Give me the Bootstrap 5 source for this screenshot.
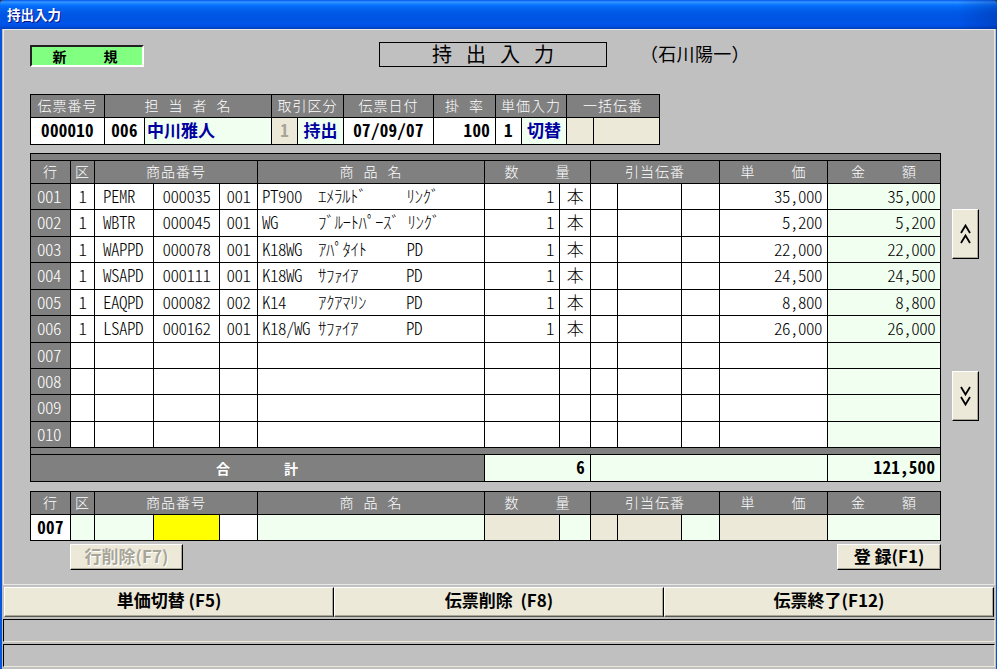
<!DOCTYPE html>
<html lang="ja">
<head>
<meta charset="utf-8">
<title>持出入力</title>
<link href="https://cdn.jsdelivr.net/npm/bootstrap@5.3.0/dist/css/bootstrap.min.css" rel="stylesheet">
<style>
html,body{margin:0;width:997px;height:669px;overflow:hidden;background:#c0c0c0}
body{font-family:"Noto Sans CJK JP",sans-serif;font-size:16px;line-height:1;color:#000;font-feature-settings:"hwid"}
.winbox{width:997px;height:669px;background:#333}
.capbar{height:29px;padding:8px 0 0 7px;color:#fff;font-weight:700;font-size:13.5px;text-shadow:1px 1px 0 #0f1089;border-radius:4px 4px 0 0;
 background:linear-gradient(90deg,transparent 96%,rgba(0,30,130,.3) 100%),linear-gradient(180deg,#0058ee 0,#3593ff 2px,#288eff 3px,#127dff 4px,#036ffc 6px,#0262ee 9px,#0057e5 14px,#0054e3 20px,#0055eb 24px,#0050e0 26px,#003fbb 29px)}
.winbody{background:#c0c0c0;border-left:2px solid #0855dd;border-right:1px solid #0855dd;padding:0 1px}
.mainpane{height:556px;border:1px solid #e8e8e8;padding:12px 0 0 26px}
.headrow{height:25px}
.modeflag{width:114px;height:22px;background:#80ff80;font-weight:700;font-size:14px;border:2px solid;border-color:#222 #fff #fff #222;white-space:pre;text-align:center;line-height:18px;word-spacing:-.8px;padding-right:4px}
.formtitle{width:228px;height:25px;margin-left:235px;border:1px solid #000;font-size:20px;line-height:21px;text-align:center;letter-spacing:14px;padding-left:14px}
.whoname{margin-left:33px;font-size:18px;line-height:23px;letter-spacing:.3px;font-feature-settings:normal;align-self:flex-start}
.ledger{table-layout:fixed;border-collapse:collapse;margin:0;white-space:pre;--bs-table-bg:#fff}
.ledger th,.ledger td{border:1px solid #000;padding:0 4px 3px;vertical-align:middle;text-align:center;font-weight:300;font-size:17px;letter-spacing:-.5px;color:#000;background:#fff;overflow:hidden;line-height:1}
.ledger th{padding-bottom:2px}
.ledger .tone-g{background:#808080;color:#fff;font-size:14px;letter-spacing:1px;word-spacing:1px}
.ledger .tone-n{background:#808080;color:#fff;padding-right:7px}
.ledger .tone-h{background:#f0fff0}
.ledger .tone-b{background:#ece9d8}
.ledger .tone-y{background:#ff0}
.ledger .blue{color:#0000a0;font-weight:700;font-size:17px;letter-spacing:0}
.ledger .strong{font-weight:700;font-size:17px;letter-spacing:.3px}
.ledger .dim{color:#a8a698;font-weight:700;font-size:17px;letter-spacing:0}
.ledger .lt{text-align:left}
.ledger .rt{text-align:right;padding-right:5px}
.ledger .ind{padding-left:8px}
.ledger .namecell{padding-left:2px}
.ledger .sum{font-weight:700;word-spacing:.8px;letter-spacing:1px;font-size:14px;padding:0 0 1px}
.rowh0{height:23px}.rowh1{height:27px}.rowh2{height:26px}.rowh3{height:7px}
.ledger .rowh3 td{padding:0;font-size:1px}
.topgrid{width:630px;margin-top:27px!important}
.listgrid,.entrygrid{width:911px}
.listwrap{margin-top:8px}
.sidekeys{margin-left:11px;padding-top:56px;height:268px}
.entrygrid{margin-top:9px!important}
.winkey{background:#ece9d8;border:1px solid;border-color:#fff #000 #000 #fff;box-shadow:inset -1px -1px 0 #aca899;border-radius:0;padding:0 0 3px;color:#000;font-weight:700;font-size:17px;line-height:1;white-space:pre}
.winkey:hover,.winkey:active{background:#ece9d8;border-color:#fff #000 #000 #fff;color:#000}
.winkey.off,.winkey:disabled{opacity:1;background:#ece9d8;border-color:#fff #000 #000 #fff;color:#a8a698;text-shadow:1px 1px 0 #fff}
.arrowkey{width:27px;height:50px;flex-direction:column;display:flex;align-items:center;justify-content:center;padding:0}
.arrowkey svg{display:block}
.minikeys{width:911px;height:26px;margin-top:3px;padding-left:40px}
.minikeys .winkey{height:26px}
.delkey{width:113px}
.regkey{width:104px}
.cmdrow{margin:2px 1px 0;height:30px;padding:0}
.cmdrow .winkey{height:30px;flex:1 1 0;border-color:#fff #000 #5a5a50 #fff;padding-bottom:5px}
.statbar{height:23px;margin-top:2px;border-top:1px solid #000;border-left:1px solid #000;border-bottom:1px solid #ece9d8;border-right:1px solid #ece9d8;background:#c0c0c0}
</style>
</head>
<body>
<div class="winbox d-flex flex-column">
  <div class="capbar">持出入力</div>
  <div class="winbody flex-grow-1">
    <div class="mainpane">
      <div class="headrow d-flex align-items-end">
        <div class="modeflag">新      規</div>
        <div class="formtitle">持出入力</div>
        <div class="whoname">（石川陽一）</div>
      </div>

      <table class="table table-bordered ledger topgrid">
        <colgroup><col style="width:74px"><col style="width:40px"><col style="width:127px"><col style="width:26px"><col style="width:46px"><col style="width:90px"><col style="width:62px"><col style="width:26px"><col style="width:45px"><col style="width:27px"><col style="width:66px"></colgroup>
        <thead><tr class="rowh0">
          <th class="tone-g">伝票番号</th><th class="tone-g" colspan="2">担 当 者 名</th><th class="tone-g" colspan="2">取引区分</th><th class="tone-g">伝票日付</th><th class="tone-g">掛 率</th><th class="tone-g" colspan="2">単価入力</th><th class="tone-g" colspan="2">一括伝番</th>
        </tr></thead>
        <tbody><tr class="rowh1">
          <td class="strong">000010</td><td class="strong">006</td><td class="blue lt tone-h namecell">中川雅人</td><td class="dim tone-b">1</td><td class="blue tone-h">持出</td><td class="strong">07/09/07</td><td class="strong rt">100</td><td class="strong">1</td><td class="blue tone-h">切替</td><td class="tone-b"></td><td class="tone-b"></td>
        </tr></tbody>
      </table>

      <div class="listwrap d-flex align-items-start">
        <table class="table table-bordered ledger listgrid">
          <colgroup><col style="width:40px"><col style="width:24px"><col style="width:59px"><col style="width:66px"><col style="width:38px"><col style="width:227px"><col style="width:75px"><col style="width:31px"><col style="width:27px"><col style="width:64px"><col style="width:38px"><col style="width:108px"><col style="width:113px"></colgroup>
          <thead>
            <tr class="rowh3"><td class="tone-n" colspan="13"></td></tr>
            <tr class="rowh0"><th class="tone-g">行</th><th class="tone-g">区</th><th class="tone-g" colspan="3">商品番号</th><th class="tone-g">商 品 名</th><th class="tone-g" colspan="2">数    量</th><th class="tone-g" colspan="3">引当伝番</th><th class="tone-g">単    価</th><th class="tone-g">金    額</th></tr>
          </thead>
          <tbody>
            <tr class="rowh2"><td class="tone-n">001</td><td>1</td><td class="lt ind">PEMR</td><td>000035</td><td>001</td><td class="lt">PT900  ｴﾒﾗﾙﾄﾞ     ﾘﾝｸﾞ</td><td class="rt">1</td><td>本</td><td></td><td></td><td></td><td class="rt">35,000</td><td class="rt tone-h">35,000</td></tr>
            <tr class="rowh1"><td class="tone-n">002</td><td>1</td><td class="lt ind">WBTR</td><td>000045</td><td>001</td><td class="lt">WG     ﾌﾞﾙｰﾄﾊﾟｰｽﾞ ﾘﾝｸﾞ</td><td class="rt">1</td><td>本</td><td></td><td></td><td></td><td class="rt">5,200</td><td class="rt tone-h">5,200</td></tr>
            <tr class="rowh2"><td class="tone-n">003</td><td>1</td><td class="lt ind">WAPPD</td><td>000078</td><td>001</td><td class="lt">K18WG  ｱﾊﾟﾀｲﾄ     PD</td><td class="rt">1</td><td>本</td><td></td><td></td><td></td><td class="rt">22,000</td><td class="rt tone-h">22,000</td></tr>
            <tr class="rowh1"><td class="tone-n">004</td><td>1</td><td class="lt ind">WSAPD</td><td>000111</td><td>001</td><td class="lt">K18WG  ｻﾌｧｲｱ      PD</td><td class="rt">1</td><td>本</td><td></td><td></td><td></td><td class="rt">24,500</td><td class="rt tone-h">24,500</td></tr>
            <tr class="rowh2"><td class="tone-n">005</td><td>1</td><td class="lt ind">EAQPD</td><td>000082</td><td>002</td><td class="lt">K14    ｱｸｱﾏﾘﾝ     PD</td><td class="rt">1</td><td>本</td><td></td><td></td><td></td><td class="rt">8,800</td><td class="rt tone-h">8,800</td></tr>
            <tr class="rowh1"><td class="tone-n">006</td><td>1</td><td class="lt ind">LSAPD</td><td>000162</td><td>001</td><td class="lt">K18/WG ｻﾌｧｲｱ      PD</td><td class="rt">1</td><td>本</td><td></td><td></td><td></td><td class="rt">26,000</td><td class="rt tone-h">26,000</td></tr>
            <tr class="rowh2"><td class="tone-n">007</td><td></td><td></td><td></td><td></td><td></td><td></td><td></td><td></td><td></td><td></td><td></td><td class="tone-h"></td></tr>
            <tr class="rowh2"><td class="tone-n">008</td><td></td><td></td><td></td><td></td><td></td><td></td><td></td><td></td><td></td><td></td><td></td><td class="tone-h"></td></tr>
            <tr class="rowh1"><td class="tone-n">009</td><td></td><td></td><td></td><td></td><td></td><td></td><td></td><td></td><td></td><td></td><td></td><td class="tone-h"></td></tr>
            <tr class="rowh2"><td class="tone-n">010</td><td></td><td></td><td></td><td></td><td></td><td></td><td></td><td></td><td></td><td></td><td></td><td class="tone-h"></td></tr>
          </tbody>
          <tfoot>
            <tr class="rowh3"><td class="tone-n" colspan="13"></td></tr>
            <tr class="rowh1"><td class="tone-n sum" colspan="6">合      計</td><td class="strong rt tone-h" colspan="2">6</td><td class="tone-h" colspan="4"></td><td class="strong rt tone-h">121,500</td></tr>
          </tfoot>
        </table>
        <div class="sidekeys d-flex flex-column justify-content-between">
          <button class="btn winkey arrowkey" type="button" aria-label="上へ"><svg width="11" height="20" viewBox="0 0 11 20" fill="none" stroke="#000" stroke-width="1.8"><path d="M1 9 5.500 1.500 10 9M1 19l4.500-7.500L10 19"/></svg></button>
          <button class="btn winkey arrowkey" type="button" aria-label="下へ"><svg width="11" height="20" viewBox="0 0 11 20" fill="none" stroke="#000" stroke-width="1.8"><path d="M1 1l4.500 7.500L10 1M1 11l4.500 7.500L10 11"/></svg></button>
        </div>
      </div>

      <table class="table table-bordered ledger entrygrid">
        <colgroup><col style="width:40px"><col style="width:24px"><col style="width:59px"><col style="width:66px"><col style="width:38px"><col style="width:227px"><col style="width:75px"><col style="width:31px"><col style="width:27px"><col style="width:64px"><col style="width:38px"><col style="width:108px"><col style="width:113px"></colgroup>
        <thead><tr class="rowh0"><th class="tone-g">行</th><th class="tone-g">区</th><th class="tone-g" colspan="3">商品番号</th><th class="tone-g">商 品 名</th><th class="tone-g" colspan="2">数    量</th><th class="tone-g" colspan="3">引当伝番</th><th class="tone-g">単    価</th><th class="tone-g">金    額</th></tr></thead>
        <tbody><tr class="rowh2"><td class="strong">007</td><td class="tone-h"></td><td class="tone-h"></td><td class="tone-y"></td><td></td><td class="tone-h"></td><td class="tone-b"></td><td class="tone-h"></td><td class="tone-b"></td><td class="tone-b"></td><td class="tone-h"></td><td class="tone-b"></td><td class="tone-h"></td></tr></tbody>
      </table>

      <div class="minikeys d-flex justify-content-between">
        <button class="btn winkey delkey off" type="button" disabled>行削除(F7)</button>
        <button class="btn winkey regkey" type="button">登 録(F1)</button>
      </div>
    </div>
    <div class="cmdrow d-flex">
      <button class="btn winkey" type="button">単価切替 (F5)</button>
      <button class="btn winkey" type="button">伝票削除  (F8)</button>
      <button class="btn winkey" type="button">伝票終了(F12)</button>
    </div>
    <div class="statbar"></div>
    <div class="statbar"></div>
  </div>
</div>
<script src="https://cdn.jsdelivr.net/npm/bootstrap@5.3.0/dist/js/bootstrap.bundle.min.js"></script>
</body>
</html>
